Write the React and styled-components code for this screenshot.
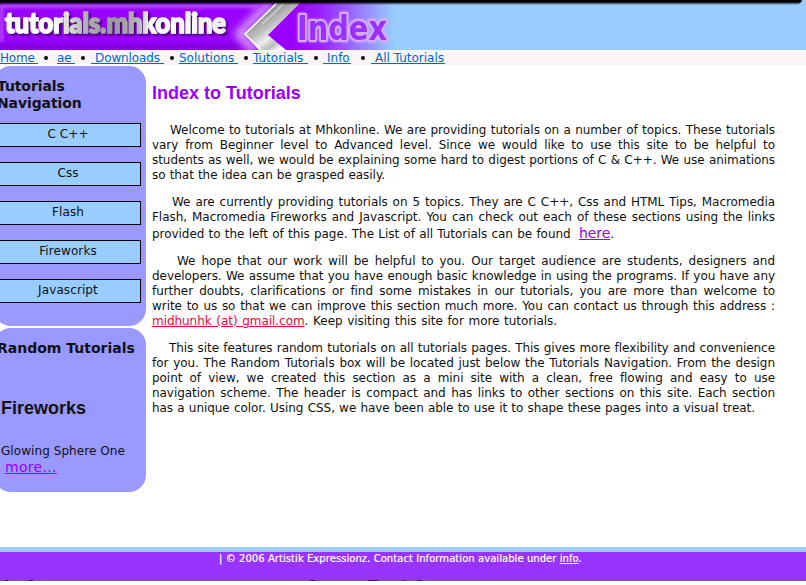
import React from "react";
import styled, { createGlobalStyle } from "styled-components";

const Global = createGlobalStyle`
  body { margin: 0; background: #fff; overflow: hidden; }
  * { box-sizing: border-box; }
`;

const Page = styled.div`
  width: 806px;
  height: 585px;
  overflow: hidden;
  display: flex;
  flex-direction: column;
  font-family: "DejaVu Sans", sans-serif;
  font-size: 12px;
  color: #111;
`;

const Header = styled.header`
  height: 50px;
  flex: none;
  background: #99ccff;
  svg { display: block; }
`;

const NavBar = styled.nav`
  height: 16px;
  flex: none;
  display: flex;
  background: linear-gradient(#faf6f8 15px, #fff 15px);
  line-height: 16px;
  white-space: pre;
`;

const NavLink = styled.a`
  display: block;
  height: 14px;
  width: ${(p) => p.$w}px;
  padding-left: ${(p) => p.$pad || 0}px;
  letter-spacing: ${(p) => p.$ls || 0}px;
  color: #0066cc;
  border-bottom: 1px solid #0066cc;
`;

const Dot = styled.i`
  flex: none;
  width: 4px;
  height: 4px;
  margin: 6px ${(p) => p.$after}px 0 ${(p) => p.$before}px;
  border-radius: 50%;
  background: #000;
`;

const Columns = styled.div`
  display: flex;
  height: 481px;
  flex: none;
`;

const Sidebar = styled.aside`
  width: 152px;
  flex: none;
  margin-left: -6px;
  display: flex;
  flex-direction: column;
  gap: 2px;
`;

const Panel = styled.section`
  height: ${(p) => p.$h}px;
  border-radius: 17px;
  background: #9999ff;
  overflow: hidden;
`;

const PanelTitle = styled.h3`
  margin: 12px 0 0 3px;
  font-size: 14px;
  line-height: 17px;
  letter-spacing: ${(p) => p.$ls}px;
  white-space: nowrap;
`;

const Menu = styled.div`
  display: flex;
  flex-direction: column;
  gap: 15px;
  width: 147px;
  margin-top: 11px;
`;

const MenuItem = styled.a`
  height: 24px;
  padding-left: 1px;
  border: 1px solid #000;
  background: #99ccff;
  text-align: center;
  line-height: 20px;
  letter-spacing: 0.1px;
`;

const Topic = styled.h2`
  margin: 41px 0 0 7px;
  font: bold 18px/21px "Liberation Sans", sans-serif;
`;

const Pick = styled.div`
  margin: 25px 0 0 7px;
  line-height: 15px;
  letter-spacing: 0.07px;
`;

const More = styled.a`
  display: block;
  margin: 0 0 0 11px;
  font-size: 14px;
  line-height: 17px;
  letter-spacing: 0.3px;
  color: #9900ff;
  text-decoration: underline;
`;

const Main = styled.main`
  margin-left: 6px;
  width: 623px;
`;

const Title = styled.h1`
  margin: 17px 0 19px;
  font: bold 18px/21px "Liberation Sans", sans-serif;
  color: #9900ff;
`;

const Paragraph = styled.p`
  margin: 0 0 12px;
`;

const Line = styled.span`
  display: block;
  height: ${(p) => p.$h || 15}px;
  line-height: ${(p) => p.$h || 15}px;
  padding-left: ${(p) => p.$indent || 0}px;
  letter-spacing: -0.05px;
  white-space: nowrap;
  text-align: justify;
  text-align-last: justify;
  width: ${(p) => p.$w || 623}px;
`;

const HereLink = styled.a`
  margin-left: 4px;
  font-size: 14px;
  color: #9900ff;
  text-decoration: underline;
`;

const MailLink = styled.a`
  color: #ff0033;
  text-decoration: underline;
`;

const Footer = styled.footer`
  height: 33px;
  flex: none;
  padding-left: 219px;
  border-top: 5px solid #99ccff;
  background: #9933ff;
  color: #fff;
  font-size: 10px;
  line-height: 13px;
  letter-spacing: 0.06px;
  -webkit-text-stroke: 0.2px #fff;
  white-space: nowrap;
  a { text-decoration: underline; }
`;

const BottomEdge = styled.div`
  height: 1px;
  flex: none;
  background: linear-gradient(
    90deg,
    #666677 5px, #222266 5px 8px, #666677 8px 29px, #222266 29px 33px,
    #666677 33px 310px, #222266 310px 315px, #666677 315px 368px, #222266 368px 378px,
    #666677 378px 403px, #222266 403px 405px, #666677 405px 417px, #222266 417px 422px,
    #666677 422px
  );
`;

function Banner() {
  return (
    <svg width="806" height="50" viewBox="0 0 806 50">
      <defs>
        <linearGradient id="fade" x1="290" x2="394" y1="0" y2="0" gradientUnits="userSpaceOnUse">
          <stop offset="0" stopColor="#9900ff" />
          <stop offset=".3" stopColor="#9922ff" />
          <stop offset="1" stopColor="#99ccff" />
        </linearGradient>
        <linearGradient id="word" x1="4" x2="228" y1="0" y2="0" gradientUnits="userSpaceOnUse">
          <stop offset="0" stopColor="#fff" />
          <stop offset=".22" stopColor="#fff" />
          <stop offset=".38" stopColor="#aaa" />
          <stop offset=".5" stopColor="#999" />
          <stop offset=".6" stopColor="#b6b6b6" />
          <stop offset=".66" stopColor="#fff" />
          <stop offset="1" stopColor="#eee" />
        </linearGradient>
        <linearGradient id="metal" x1="252" x2="282" y1="5" y2="48" gradientUnits="userSpaceOnUse">
          <stop offset="0" stopColor="#777" />
          <stop offset=".3" stopColor="#999" />
          <stop offset=".5" stopColor="#bbb" />
          <stop offset=".7" stopColor="#eee" />
          <stop offset=".85" stopColor="#bbb" />
          <stop offset="1" stopColor="#fff" />
        </linearGradient>
        <linearGradient id="topShade" x1="0" x2="0" y1="0" y2="1">
          <stop offset="0" stopColor="#000" />
          <stop offset=".4" stopColor="#000" />
          <stop offset="1" stopColor="#000" stopOpacity="0" />
        </linearGradient>
        <filter id="soft" x="-20%" y="-40%" width="140%" height="180%"><feGaussianBlur stdDeviation="1.5" /></filter>
        <filter id="wide" x="-50%" y="-50%" width="200%" height="200%"><feGaussianBlur stdDeviation="4" /></filter>
        <filter id="shadow" x="-10%" y="-20%" width="120%" height="160%">
          <feDropShadow dx="2" dy="2" stdDeviation="1.2" floodColor="#310055" floodOpacity=".8" />
        </filter>
        <filter id="glow" x="-15%" y="-30%" width="130%" height="160%">
          <feDropShadow dx="0" dy="0" stdDeviation="1.3" floodColor="#e0c0ff" floodOpacity="1" />
        </filter>
      </defs>
      <rect width="394" height="50" fill="url(#fade)" />
      <path d="M0 4H258V8H3V42H0Z" fill="#b54dff" filter="url(#soft)" />
      <path d="M0 43H240V50H0Z" fill="#7700cc" opacity=".6" filter="url(#soft)" />
      <path d="M271 2L239 34L256 52" fill="none" stroke="#ecd0ff" strokeWidth="8" opacity=".8" filter="url(#wide)" />
      <path d="M276 2H301L268 35L286 50H259L244 34Z" fill="url(#metal)" />
      <path d="M277 3L245 34L260 49" fill="none" stroke="#fff" strokeWidth="1.5" />
      <path d="M262 24L274 13L284 3" fill="none" stroke="#ddd" strokeWidth="2" opacity=".6" />
      <text
        x="5" y="33" textLength="221" lengthAdjust="spacingAndGlyphs"
        fontFamily="Lato" fontWeight="900" fontSize="28"
        fill="url(#word)" stroke="url(#word)" strokeWidth="1.7" filter="url(#shadow)"
      >tutorials.mhkonline</text>
      <text
        x="297" y="40" textLength="90" lengthAdjust="spacingAndGlyphs"
        fontFamily="DejaVu Sans" fontWeight="bold" fontSize="34" strokeLinejoin="round"
        fill="#9933ff" stroke="#d9a8ff" strokeWidth="4" paintOrder="stroke" filter="url(#glow)"
      >Index</text>
      <path d="M0 0H802Q801 5 794 5H0Z" fill="url(#topShade)" />
      <path d="M0 0H799Q798 2 794 2H0Z" fill="#000" />
    </svg>
  );
}

const topics = ["C C++", "Css", "Flash", "Fireworks", "Javascript"];

export default function App() {
  return (
    <Page>
      <Global />
      <Header><Banner /></Header>
      <NavBar>
        <NavLink $w={38} $ls={-0.2}>Home </NavLink><Dot $before={6} $after={9} />
        <NavLink $w={18}>ae </NavLink><Dot $before={6} $after={6} />
        <NavLink $w={73} $pad={4} $ls={-0.1}>Downloads </NavLink><Dot $before={6} $after={5} />
        <NavLink $w={59} $ls={0}>Solutions </NavLink><Dot $before={6} $after={5} />
        <NavLink $w={55}>Tutorials </NavLink><Dot $before={6} $after={5} />
        <NavLink $w={28} $pad={4}>Info</NavLink><Dot $before={10} $after={6} />
        <NavLink $w={74} $pad={4}>All Tutorials</NavLink>
      </NavBar>
      <Columns>
        <Sidebar>
          <Panel $h={260}>
            <PanelTitle $ls={-0.1}>Tutorials<br />Navigation</PanelTitle>
            <Menu>
              {topics.map((t) => <MenuItem key={t}>{t}</MenuItem>)}
            </Menu>
          </Panel>
          <Panel $h={164}>
            <PanelTitle $ls={0}>Random Tutorials</PanelTitle>
            <Topic>Fireworks</Topic>
            <Pick>Glowing Sphere One</Pick>
            <More>more...</More>
          </Panel>
        </Sidebar>
        <Main>
          <Title>Index to Tutorials</Title>
          <Paragraph>
            <Line $indent={18}>Welcome to tutorials at Mhkonline. We are providing tutorials on a number of topics. These tutorials</Line>
            <Line>vary from Beginner level to Advanced level. Since we would like to use this site to be helpful to</Line>
            <Line>students as well, we would be explaining some hard to digest portions of C &amp; C++. We use animations</Line>
            <Line $w={233}>so that the idea can be grasped easily.</Line>
          </Paragraph>
          <Paragraph>
            <Line $indent={20}>We are currently providing tutorials on 5 topics. They are C C++, Css and HTML Tips, Macromedia</Line>
            <Line>Flash, Macromedia Fireworks and Javascript. You can check out each of these sections using the links</Line>
            <Line $h={17} $w={462}>provided to the left of this page. The List of all Tutorials can be found <HereLink>here</HereLink>.</Line>
          </Paragraph>
          <Paragraph>
            <Line $indent={25}>We hope that our work will be helpful to you. Our target audience are students, designers and</Line>
            <Line>developers. We assume that you have enough basic knowledge in using the programs. If you have any</Line>
            <Line>further doubts, clarifications or find some mistakes in our tutorials, you are more than welcome to</Line>
            <Line>write to us so that we can improve this section much more. You can contact us through this address :</Line>
            <Line $w={405}><MailLink>midhunhk (at) gmail.com</MailLink>. Keep visiting this site for more tutorials.</Line>
          </Paragraph>
          <Paragraph>
            <Line $indent={17}>This site features random tutorials on all tutorials pages. This gives more flexibility and convenience</Line>
            <Line>for you. The Random Tutorials box will be located just below the Tutorials Navigation. From the design</Line>
            <Line>point of view, we created this section as a mini site with a clean, free flowing and easy to use</Line>
            <Line>navigation scheme. The header is compact and has links to other sections on this site. Each section</Line>
            <Line $w={603}>has a unique color. Using CSS, we have been able to use it to shape these pages into a visual treat.</Line>
          </Paragraph>
        </Main>
      </Columns>
      <Footer>| © 2006 Artistik Expressionz. Contact Information available under <a>info</a>.</Footer>
      <BottomEdge />
    </Page>
  );
}
